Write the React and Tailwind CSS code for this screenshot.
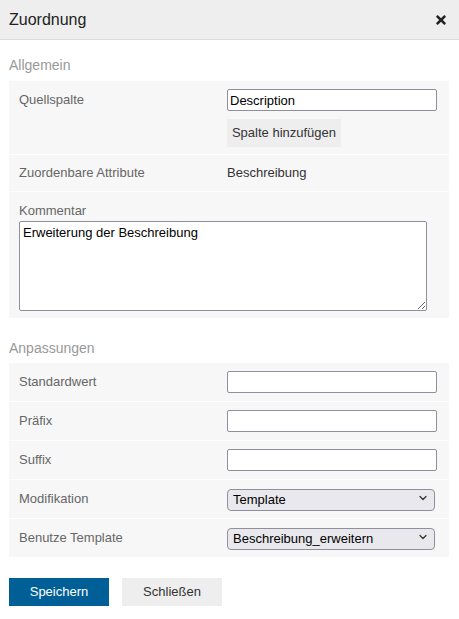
import { FaTimes } from "react-icons/fa";
import { ChevronDown } from "lucide-react";

const font = { fontFamily: '"Liberation Sans", Arial, sans-serif' };

function Row({ label, children, className = "" }) {
  return (
    <div className={`grid grid-cols-[208px_210px] items-center bg-[#f7f7f7] pl-[10px] ${className}`}>
      <span className="text-[13px] text-[#666]">{label}</span>
      {children}
    </div>
  );
}

function TextInput({ value = "" }) {
  return (
    <input
      className="h-[22px] w-[210px] rounded-[2px] border border-[#8f8f9d] bg-white px-[2px] text-[13px] text-black outline-none"
      defaultValue={value}
      type="text"
    />
  );
}

function Select({ value }) {
  return (
    <div className="relative w-[208px]">
      <select
        className="h-[22px] w-full appearance-none rounded-[4px] border border-[#8f8f9d] bg-[#e9e9ed] pl-[5px] text-[13px] text-black outline-none"
        defaultValue={value}
      >
        <option>{value}</option>
      </select>
      <ChevronDown
        className="pointer-events-none absolute right-[6px] top-[5px] text-[#333]"
        size={12}
        strokeWidth={2.5}
      />
    </div>
  );
}

export default function App() {
  return (
    <div className="min-h-[619px] w-[459px] bg-white text-[#333]" style={font}>
      <div className="flex h-[40px] items-center justify-between border-b border-[#ddd] bg-[#eeeeee] px-[9px]">
        <h1 className="text-[16px] text-[#222]">Zuordnung</h1>
        <button className="mr-[2px] text-[#222]" type="button">
          <FaTimes size={14} />
        </button>
      </div>

      <div className="px-[9px]">
        <h2 className="pb-[8px] pt-[17px] text-[14px] leading-[16px] text-[#999]">Allgemein</h2>
        <div className="flex w-[440px] flex-col gap-px bg-white">
          <div className="grid grid-cols-[208px_210px] items-start bg-[#f7f7f7] pb-[7px] pl-[10px] pt-[8px]">
            <span className="pt-[3px] text-[13px] leading-[15px] text-[#666]">Quellspalte</span>
            <div className="flex flex-col items-start gap-[8px]">
              <TextInput value="Description" />
              <button
                className="h-[28px] w-[114px] bg-[#eeeeee] text-[13px] text-[#333]"
                type="button"
              >
                Spalte hinzufügen
              </button>
            </div>
          </div>
          <Row className="h-[36px]" label="Zuordenbare Attribute">
            <span className="text-[13px] text-[#333]">Beschreibung</span>
          </Row>
          <div className="flex flex-col bg-[#f7f7f7] pb-[7px] pl-[10px] pt-[11px]">
            <span className="text-[13px] leading-[15px] text-[#666]">Kommentar</span>
            <textarea
              className="mt-[3px] h-[90px] w-[408px] rounded-[2px] border border-[#8f8f9d] bg-white px-[3px] py-px text-[13px] text-black outline-none"
              defaultValue="Erweiterung der Beschreibung"
            />
          </div>
        </div>

        <h2 className="pb-[7px] pt-[22px] text-[14px] leading-[16px] text-[#999]">Anpassungen</h2>
        <div className="flex w-[440px] flex-col gap-px bg-white">
          <Row className="h-[38px]" label="Standardwert">
            <TextInput />
          </Row>
          <Row className="h-[38px]" label="Präfix">
            <TextInput />
          </Row>
          <Row className="h-[38px]" label="Suffix">
            <TextInput />
          </Row>
          <Row className="h-[38px]" label="Modifikation">
            <Select value="Template" />
          </Row>
          <Row className="h-[38px]" label="Benutze Template">
            <Select value="Beschreibung_erweitern" />
          </Row>
        </div>

        <div className="mt-[21px] flex gap-[13px]">
          <button className="h-[28px] w-[100px] bg-[#005f96] text-[13px] text-white" type="button">
            Speichern
          </button>
          <button className="h-[28px] w-[100px] bg-[#eeeeee] text-[13px] text-[#333]" type="button">
            Schließen
          </button>
        </div>
      </div>
    </div>
  );
}
